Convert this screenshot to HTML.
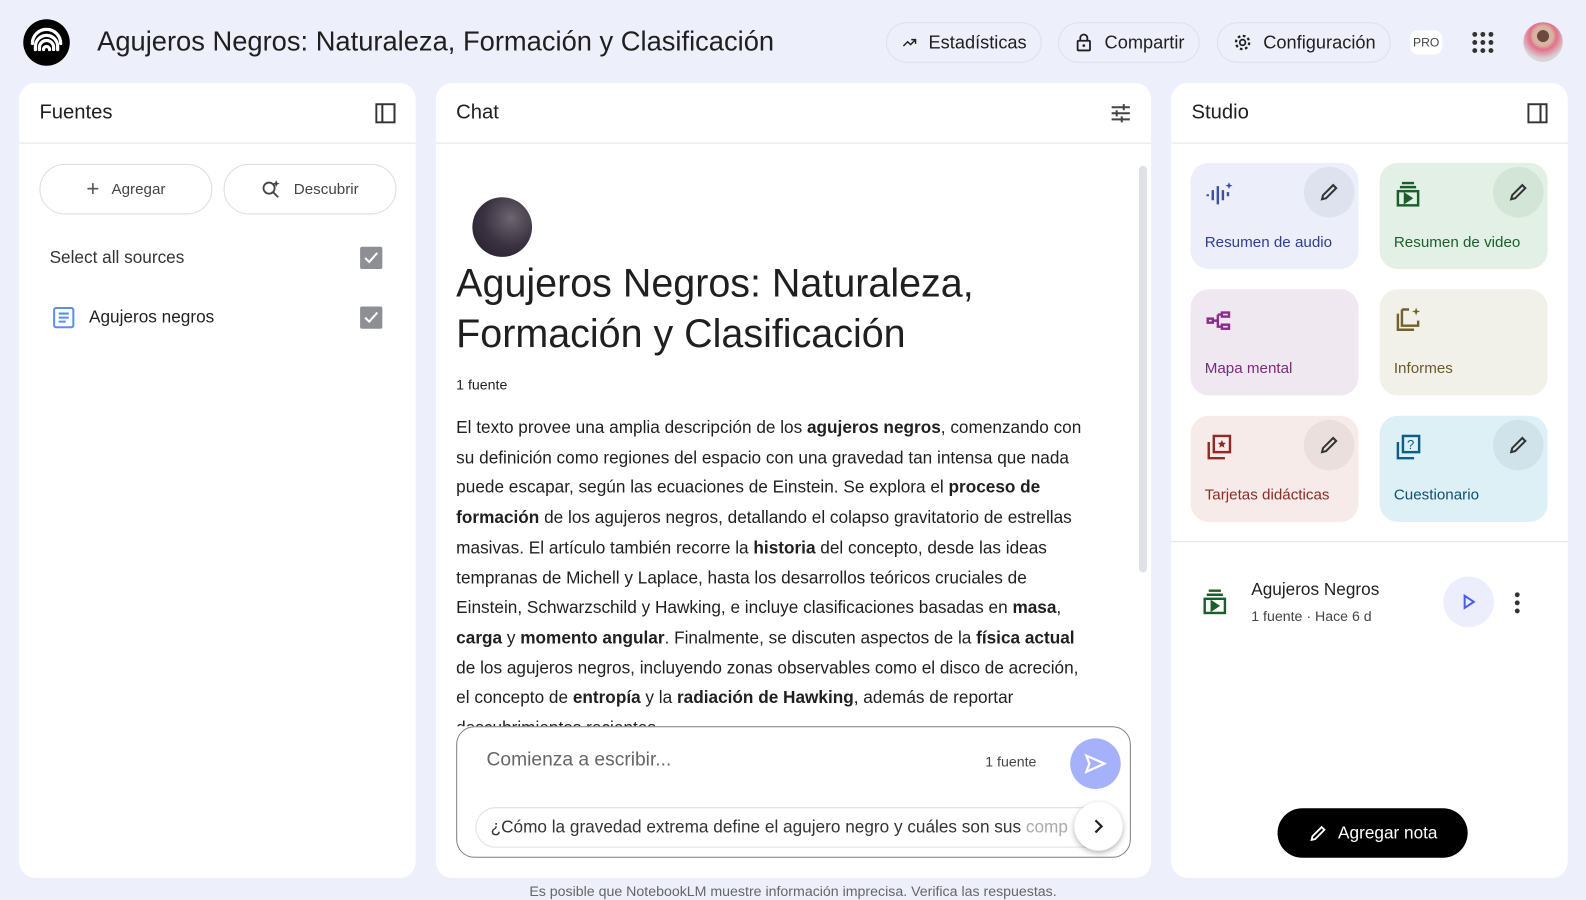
<!DOCTYPE html>
<html><head><meta charset="utf-8"><style>
*{box-sizing:border-box;margin:0;padding:0}
html,body{width:1586px;height:900px;overflow:hidden;background:#edeffa}
#w{position:absolute;left:0;top:0;width:1568px;height:890px;transform:scale(1.0115);transform-origin:0 0;font-family:"Liberation Sans",sans-serif;color:#1f1f1f}
.abs{position:absolute}
.panel{position:absolute;top:82px;height:786px;background:#fff;border-radius:16px;overflow:hidden}
.ph{height:60px;border-bottom:1px solid #e1e3ea;display:flex;align-items:center;padding:0 20px;font-size:20px;justify-content:space-between}
.pill{position:absolute;top:22px;height:40px;border:1px solid #dde0ea;border-radius:20px;display:flex;align-items:center;gap:10px;padding:0 14px;font-size:18px;color:#1f1f1f}
.btn{position:absolute;top:80px;height:50px;border:1px solid #dadce6;border-radius:25px;display:flex;align-items:center;justify-content:center;gap:12px;font-size:15px;color:#444}
.cb{position:absolute;width:22px;height:22px;background:#8d8f94;border-radius:2px}
.card{position:absolute;width:166px;height:105px;border-radius:18px}
.card .lbl{position:absolute;left:14px;top:70px;font-size:15px}
.card .ic{position:absolute;left:14px;top:16px}
.card .ed{position:absolute;right:4px;top:4px;width:50px;height:50px;border-radius:25px;display:flex;align-items:center;justify-content:center}
p.txt{font-size:17px;line-height:29.7px;color:#1f1f1f}
b{font-weight:bold}
</style></head><body><div id="w">
<div class="abs" style="left:23px;top:19px;width:46px;height:46px;border-radius:23px;background:#000">
<svg width="46" height="46" viewBox="0 0 46 46"><g fill="none" stroke="#fff" stroke-width="3.2" stroke-linecap="round"><path d="M12 30v-3a11 11 0 0 1 22 0v3"/><path d="M16 30v-2a7 7 0 0 1 14 0v2"/><path d="M20 30a3 3 0 0 1 6 0"/><path d="M9 24a14 14 0 0 1 28 0"/></g></svg></div>
<div class="abs" style="left:96px;top:26px;font-size:27px;color:#1f1f1f">Agujeros Negros: Naturaleza, Formación y Clasificación</div>
<div class="pill" style="left:876px;width:154px"><svg width="22" height="22" viewBox="0 0 24 24"><path d="M3 17l6-6 4 4 7-7M14 8h6v6" fill="none" stroke="#1f1f1f" stroke-width="2"/></svg>Estadísticas</div>
<div class="pill" style="left:1046px;width:140px"><svg width="22" height="22" viewBox="0 0 24 24"><rect x="5" y="10" width="14" height="11" rx="1" fill="none" stroke="#1f1f1f" stroke-width="2"/><path d="M8 10V7a4 4 0 0 1 8 0v3" fill="none" stroke="#1f1f1f" stroke-width="2"/><circle cx="12" cy="15.5" r="1.5" fill="#1f1f1f"/></svg>Compartir</div>
<div class="pill" style="left:1203px;width:172px"><svg width="22" height="22" viewBox="0 0 24 24"><circle cx="12" cy="12" r="3.2" fill="none" stroke="#1f1f1f" stroke-width="2"/><circle cx="12" cy="12" r="7.5" fill="none" stroke="#1f1f1f" stroke-width="2.6" stroke-dasharray="3 2.9"/></svg>Configuración</div>
<div class="abs" style="left:1394px;top:30px;width:32px;height:24px;background:#fff;border-radius:8px;font-size:12px;color:#444;display:flex;align-items:center;justify-content:center">PRO</div>
<svg class="abs" style="left:1455px;top:31px" width="22" height="22" viewBox="0 0 22 22"><g fill="#333"><circle cx="3" cy="3" r="2.4"/><circle cx="11" cy="3" r="2.4"/><circle cx="19" cy="3" r="2.4"/><circle cx="3" cy="11" r="2.4"/><circle cx="11" cy="11" r="2.4"/><circle cx="19" cy="11" r="2.4"/><circle cx="3" cy="19" r="2.4"/><circle cx="11" cy="19" r="2.4"/><circle cx="19" cy="19" r="2.4"/></g></svg>
<div class="abs" style="left:1506px;top:22px;width:39px;height:39px;border-radius:20px;background:radial-gradient(circle at 50% 35%,#6b4a3e 0 18%,#d9b4a2 19% 30%,#e2708a 42%,#d8d3d4 70%)"></div>

<div class="panel" style="left:19px;width:392px">
 <div class="ph"><span>Fuentes</span><svg width="20" height="20" viewBox="0 0 20 20"><rect x="1" y="1" width="18" height="18" fill="none" stroke="#333" stroke-width="2"/><path d="M7 1v18" stroke="#333" stroke-width="2"/></svg></div>
 <div class="btn" style="left:20px;width:171px"><span style="font-size:22px;color:#555">+</span>Agregar</div>
 <div class="btn" style="left:202px;width:171px"><svg width="20" height="20" viewBox="0 0 20 20"><circle cx="8" cy="9" r="5.5" fill="none" stroke="#444" stroke-width="1.8"/><path d="M12 13l5 5" stroke="#444" stroke-width="1.8"/><path d="M15 1l1 2.5 2.5 1-2.5 1-1 2.5-1-2.5-2.5-1 2.5-1z" fill="#444"/></svg>Descubrir</div>
 <div class="abs" style="left:30px;top:163px;font-size:17px;color:#333">Select all sources</div>
 <div class="cb" style="left:337px;top:162px"><svg width="22" height="22"><path d="M5 11l4 4 8-9" fill="none" stroke="#fff" stroke-width="2"/></svg></div>
 <svg class="abs" style="left:33px;top:221px" width="22" height="22" viewBox="0 0 22 22"><rect x="1.5" y="1.5" width="19" height="19" rx="2" fill="none" stroke="#5b8def" stroke-width="2"/><path d="M6 7h10M6 11h10M6 15h7" stroke="#5b8def" stroke-width="2"/></svg>
 <div class="abs" style="left:69px;top:222px;font-size:17px">Agujeros negros</div>
 <div class="cb" style="left:337px;top:221px"><svg width="22" height="22"><path d="M5 11l4 4 8-9" fill="none" stroke="#fff" stroke-width="2"/></svg></div>
</div>

<div class="panel" style="left:431px;width:707px">
 <div class="ph"><span>Chat</span><svg width="20" height="20" viewBox="0 0 20 20" stroke="#444" stroke-width="2"><path d="M1 4h18M1 10h18M1 16h18"/><path d="M13 1v6M6 7v6M11 13v6"/></svg></div>
 <div class="abs" style="left:695px;top:82px;width:8px;height:402px;background:#dfe1e7;border-radius:4px"></div>
 <div class="abs" style="left:36px;top:113px;width:59px;height:59px;border-radius:30px;background:radial-gradient(circle at 65% 35%,#6c6670,#3a3240 50%,#241c2a)"></div>
 <div class="abs" style="left:20px;top:174px;font-size:39px;line-height:50px;color:#1f1f1f">Agujeros Negros: Naturaleza,<br>Formación y Clasificación</div>
 <div class="abs" style="left:20px;top:290px;font-size:14px">1 fuente</div>
 <div class="abs" style="left:20px;top:326px;width:630px;height:310px;overflow:hidden"><p class="txt">El texto provee una amplia descripción de los <b>agujeros negros</b>, comenzando con su definición como regiones del espacio con una gravedad tan intensa que nada puede escapar, según las ecuaciones de Einstein. Se explora el <b>proceso de formación</b> de los agujeros negros, detallando el colapso gravitatorio de estrellas masivas. El artículo también recorre la <b>historia</b> del concepto, desde las ideas tempranas de Michell y Laplace, hasta los desarrollos teóricos cruciales de Einstein, Schwarzschild y Hawking, e incluye clasificaciones basadas en <b>masa</b>, <b>carga</b> y <b>momento angular</b>. Finalmente, se discuten aspectos de la <b>física actual</b> de los agujeros negros, incluyendo zonas observables como el disco de acreción, el concepto de <b>entropía</b> y la <b>radiación de Hawking</b>, además de reportar descubrimientos recientes.</p></div>
 <div class="abs" style="left:20px;top:636px;width:667px;height:130px;border:1px solid #7d7f86;border-radius:18px;background:#fff">
  <div class="abs" style="left:29px;top:22px;font-size:19px;color:#666">Comienza a escribir...</div>
  <div class="abs" style="left:522px;top:26px;font-size:14px;color:#444">1 fuente</div>
  <div class="abs" style="left:606px;top:11px;width:50px;height:50px;border-radius:25px;background:#a6b1fb;display:flex;align-items:center;justify-content:center"><svg width="24" height="24" viewBox="0 0 24 24"><path d="M3 4l18 8-18 8 3-8z" fill="none" stroke="#fff" stroke-width="2.2"/></svg></div>
  <div class="abs" style="left:18px;top:79px;width:630px;height:40px;border:1px solid #dde0ea;border-radius:20px;overflow:hidden;white-space:nowrap;padding:9px 14px;font-size:17px;color:#333">¿Cómo la gravedad extrema define el agujero negro y cuáles son sus <span style="color:#aaa">comp</span></div>
  <div class="abs" style="left:610px;top:74px;width:48px;height:48px;border-radius:24px;background:#fff;box-shadow:0 2px 6px rgba(0,0,0,.3);display:flex;align-items:center;justify-content:center"><svg width="16" height="16" viewBox="0 0 16 16"><path d="M5 2l6 6-6 6" fill="none" stroke="#222" stroke-width="2.2"/></svg></div>
 </div>
</div>

<div class="panel" style="left:1158px;width:392px">
 <div class="ph"><span>Studio</span><svg width="20" height="20" viewBox="0 0 20 20"><rect x="1" y="1" width="18" height="18" fill="none" stroke="#333" stroke-width="2"/><path d="M13 1v18" stroke="#333" stroke-width="2"/></svg></div>
 <div class="card" style="left:19px;top:79px;background:#eceef9">
  <svg class="ic" width="30" height="30" viewBox="0 0 30 30" stroke="#3e4fa0" stroke-width="2.4"><path d="M3 15v2M8 11v10M13 7v18M18 11v10M23 13v4"/><path d="M24 3l1 2.5 2.5 1-2.5 1-1 2.5-1-2.5-2.5-1 2.5-1z" fill="#3e4fa0" stroke="none"/></svg>
  <div class="ed" style="background:#dee1ee"><svg width="22" height="22" viewBox="0 0 22 22"><path d="M4 18l1-4 10-10 3 3-10 10z" fill="none" stroke="#333" stroke-width="2"/></svg></div>
  <div class="lbl" style="color:#2f3f8f">Resumen de audio</div></div>
 <div class="card" style="left:206px;top:79px;background:#e2f0e5">
  <svg class="ic" width="30" height="30" viewBox="0 0 30 30" fill="none" stroke="#1c5e2b" stroke-width="2.4"><path d="M8 4h12M6 8h16"/><rect x="4" y="12" width="20" height="14"/><path d="M11 15v8l6-4z" fill="#1c5e2b"/></svg>
  <div class="ed" style="background:#d3e5d7"><svg width="22" height="22" viewBox="0 0 22 22"><path d="M4 18l1-4 10-10 3 3-10 10z" fill="none" stroke="#333" stroke-width="2"/></svg></div>
  <div class="lbl" style="color:#1c5e2b">Resumen de video</div></div>
 <div class="card" style="left:19px;top:204px;background:#f0e8f0">
  <svg class="ic" width="30" height="30" viewBox="0 0 30 30" fill="none" stroke="#8a2d8a" stroke-width="2.4"><rect x="3" y="13" width="5" height="4"/><rect x="17" y="7" width="7" height="4"/><rect x="17" y="19" width="7" height="4"/><path d="M8 15h5M13 9v12h4M13 9h4"/></svg>
  <div class="lbl" style="color:#7b2a7b">Mapa mental</div></div>
 <div class="card" style="left:206px;top:204px;background:#f1f1ea">
  <svg class="ic" width="30" height="30" viewBox="0 0 30 30" fill="none" stroke="#73602b" stroke-width="2.4"><path d="M4 8v16h16M8 4v16h16v-5M8 4h7"/><path d="M22 2l1 3 3 1-3 1-1 3-1-3-3-1 3-1z" fill="#73602b" stroke="none"/></svg>
  <div class="lbl" style="color:#6b5a28">Informes</div></div>
 <div class="card" style="left:19px;top:329px;background:#f7ebe9">
  <svg class="ic" width="30" height="30" viewBox="0 0 30 30" fill="none" stroke="#8f2a25" stroke-width="2.4"><path d="M4 10v16h16"/><rect x="9" y="4" width="16" height="16"/><path d="M17 8l1.2 2.6 2.8.3-2.1 1.9.6 2.8-2.5-1.5-2.5 1.5.6-2.8-2.1-1.9 2.8-.3z" fill="#8f2a25" stroke="none"/></svg>
  <div class="ed" style="background:#ebdfdd"><svg width="22" height="22" viewBox="0 0 22 22"><path d="M4 18l1-4 10-10 3 3-10 10z" fill="none" stroke="#333" stroke-width="2"/></svg></div>
  <div class="lbl" style="color:#8a2c26">Tarjetas didácticas</div></div>
 <div class="card" style="left:206px;top:329px;background:#ddf0f6">
  <svg class="ic" width="30" height="30" viewBox="0 0 30 30" fill="none" stroke="#0b5e87" stroke-width="2.4"><path d="M4 10v16h16"/><rect x="9" y="4" width="16" height="16"/><text x="13" y="17" font-size="13" fill="#0b5e87" stroke="none" font-family="Liberation Sans">?</text></svg>
  <div class="ed" style="background:#d0e3ea"><svg width="22" height="22" viewBox="0 0 22 22"><path d="M4 18l1-4 10-10 3 3-10 10z" fill="none" stroke="#333" stroke-width="2"/></svg></div>
  <div class="lbl" style="color:#0b4f73">Cuestionario</div></div>
 <div class="abs" style="left:0;top:453px;width:392px;height:1px;background:#e1e3ea"></div>
 <svg class="abs" style="left:29px;top:498px" width="30" height="30" viewBox="0 0 30 30" fill="none" stroke="#1c5e2b" stroke-width="2.4"><path d="M8 4h12M6 8h16"/><rect x="4" y="12" width="20" height="14"/><path d="M11 15v8l6-4z" fill="#1c5e2b"/></svg>
 <div class="abs" style="left:79px;top:491px;font-size:17px">Agujeros Negros</div>
 <div class="abs" style="left:79px;top:519px;font-size:14px;color:#444">1 fuente · Hace 6 d</div>
 <div class="abs" style="left:269px;top:488px;width:50px;height:50px;border-radius:25px;background:#eceefb;display:flex;align-items:center;justify-content:center"><svg width="16" height="16" viewBox="0 0 16 16"><path d="M4 2v12l9-6z" fill="none" stroke="#4a5cf0" stroke-width="2"/></svg></div>
 <svg class="abs" style="left:337px;top:502px" width="10" height="24"><g fill="#333"><circle cx="5" cy="4" r="2.4"/><circle cx="5" cy="12" r="2.4"/><circle cx="5" cy="20" r="2.4"/></g></svg>
 <div class="abs" style="left:105px;top:717px;width:188px;height:49px;border-radius:25px;background:#000;color:#fff;font-size:17px;display:flex;align-items:center;justify-content:center;gap:10px"><svg width="20" height="20" viewBox="0 0 22 22"><path d="M4 18l1-4 10-10 3 3-10 10z" fill="none" stroke="#fff" stroke-width="2"/></svg>Agregar nota</div>
</div>
<div class="abs" style="left:0;width:1568px;top:873px;text-align:center;font-size:14px;color:#666">Es posible que NotebookLM muestre información imprecisa. Verifica las respuestas.</div>
</div></body></html>
